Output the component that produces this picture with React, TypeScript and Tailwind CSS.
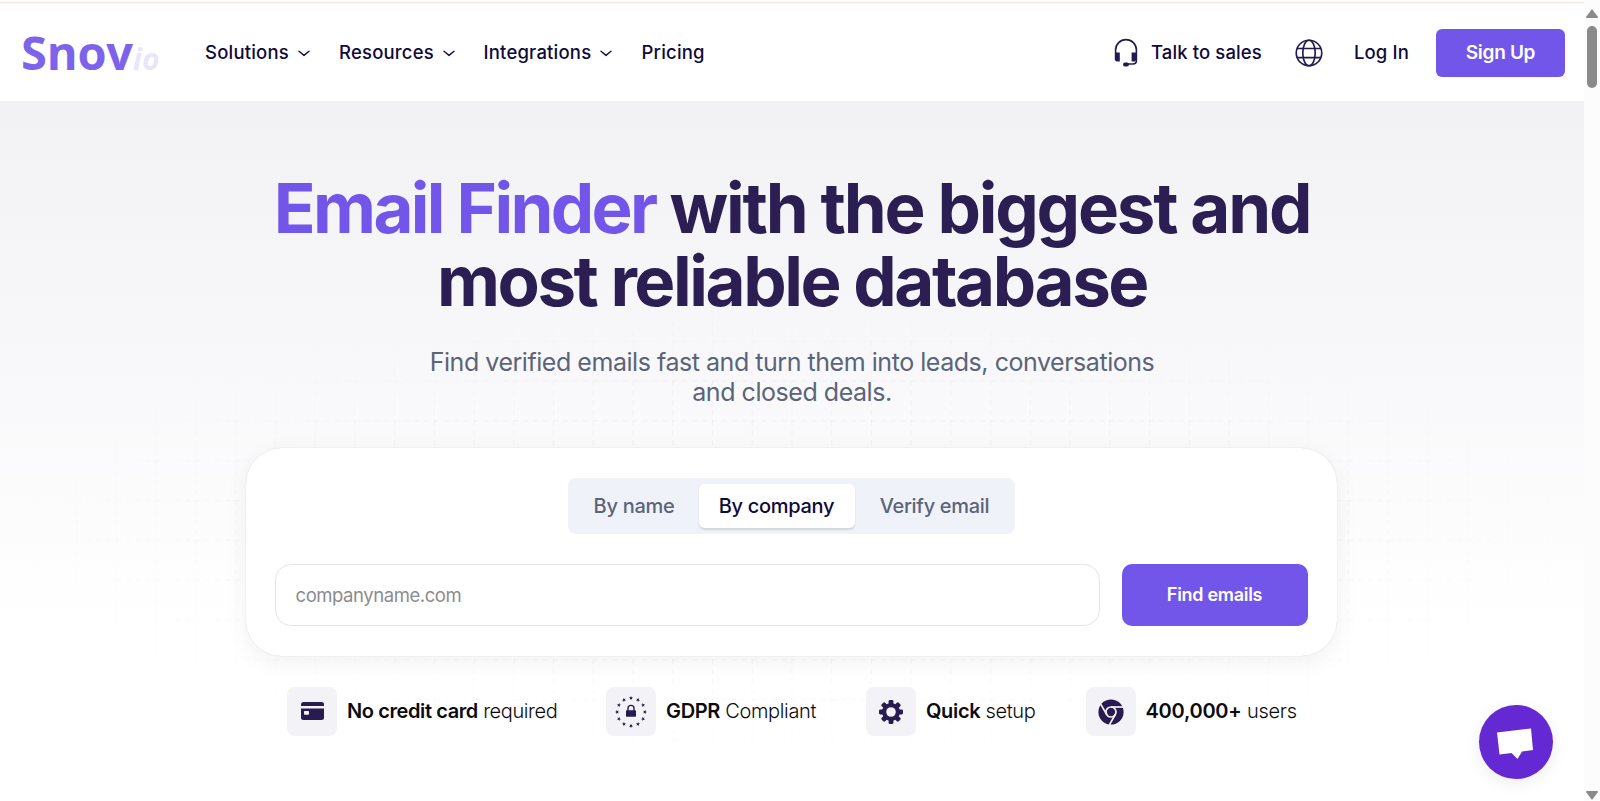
import React, { useState } from "react";

const navLinks = [
  { label: "Solutions", menu: true, width: "w-[134px]" },
  { label: "Resources", menu: true, width: "w-[144.5px]" },
  { label: "Integrations", menu: true, width: "w-[158px]" },
  { label: "Pricing", menu: false, width: "w-[64px]" },
];

const tabs = [
  { label: "By name", width: "w-[129px]" },
  { label: "By company", width: "w-[156px]" },
  { label: "Verify email", width: "w-[160px]" },
];

const Chevron = () => (
  <svg width="12" height="7" viewBox="0 0 12 7" fill="none" stroke="#1b1145" strokeWidth="1.4" strokeLinecap="round" strokeLinejoin="round">
    <path d="M1 1.2 L6 5.4 L11 1.2" />
  </svg>
);

const HeadsetIcon = () => (
  <svg className="-mt-[2px]" width="24" height="29" viewBox="0 0 24 29" fill="none" stroke="#241a52" strokeWidth="1.6">
    <path d="M1.6 22 V12 A10.4 10.4 0 0 1 22.4 12 V22.5 Q22.4 26 19 26 H12" />
    <path d="M1 14.5 H5.8 V23.5 H3 Q1 23.5 1 21.5 Z M17.6 14.5 H23 V21 L21 23.5 H17.6 Z" fill="#241a52" stroke="none" />
    <rect x="9" y="24.6" width="6" height="3.8" rx="1.9" fill="#241a52" stroke="none" />
  </svg>
);

const GlobeIcon = () => (
  <svg width="28" height="28" viewBox="0 0 27 27" fill="none" stroke="#241a52" strokeWidth="1.6">
    <circle cx="13.5" cy="13.5" r="12.3" />
    <ellipse cx="13.5" cy="13.5" rx="6" ry="12.3" />
    <path d="M2 9.2 H25 M2 17.9 H25" />
  </svg>
);

const CardIcon = () => (
  <svg className="-mt-px" width="23" height="18" viewBox="0 0 23 18" fill="#271b52">
    <path d="M2.5 0 H20.5 Q23 0 23 2.5 V4 H0 V2.5 Q0 0 2.5 0 Z" />
    <path fillRule="evenodd" d="M0 6.6 H23 V15.5 Q23 18 20.5 18 H2.5 Q0 18 0 15.5 Z M3.8 9 Q3 9 3 9.8 V12 Q3 12.8 3.8 12.8 H7.2 Q8 12.8 8 12 V9.8 Q8 9 7.2 9 Z" />
  </svg>
);

const GdprIcon = () => (
  <svg width="32" height="32" viewBox="0 0 32 32" fill="#271b52">
    {Array.from({ length: 12 }, (_, i) => (
      <path
        key={i}
        d="M16 0.1 L16.6 1.3 L17.9 1.5 L16.9 2.4 L17.2 3.7 L16 3 L14.8 3.7 L15.1 2.4 L14.1 1.5 L15.4 1.3 Z"
        transform={`rotate(${i * 30} 16 16)`}
      />
    ))}
    <rect x="11" y="14.2" width="10" height="6.6" rx="0.8" />
    <path d="M13 15 V12.4 A3 3 0 0 1 19 12.4 V15" fill="none" stroke="#271b52" strokeWidth="1.4" />
  </svg>
);

const GearIcon = () => (
  <svg width="24" height="24" viewBox="-12 -12 24 24" fill="#271b52">
    {[0, 45, 90, 135].map((a) => (
      <rect key={a} x="-2.4" y="-12" width="4.8" height="24" rx="1.3" transform={`rotate(${a})`} />
    ))}
    <circle r="9" />
    <circle r="4.8" fill="#f3f2f6" />
  </svg>
);

const ChromeIcon = () => (
  <svg width="26" height="26" viewBox="-13 -13 26 26">
    <circle r="12.6" fill="#271b52" />
    <circle r="5" fill="none" stroke="#f3f2f6" strokeWidth="1.7" />
    {[0, 120, 240].map((a) => (
      <path key={a} d="M0 -5 H12.2" stroke="#f3f2f6" strokeWidth="1.7" transform={`rotate(${a})`} />
    ))}
  </svg>
);

const features = [
  { icon: <CardIcon />, bold: "No credit card", text: "required", width: "w-[319px]", tracking: "tracking-[-0.4px]" },
  { icon: <GdprIcon />, bold: "GDPR", text: "Compliant", width: "w-[260px]", tracking: "tracking-[-0.35px]" },
  { icon: <GearIcon />, bold: "Quick", text: "setup", width: "w-[219.5px]", tracking: "tracking-[-0.35px]" },
  { icon: <ChromeIcon />, bold: "400,000+", text: "users", width: "w-[215px]", tracking: "tracking-[-0.25px]" },
];

// faint dashed grid behind the form
const GridBackground = () => (
  <svg
    className="absolute inset-x-0 top-[200px] mask-[radial-gradient(ellipse_52%_52%_at_50%_50%,black_60%,transparent_100%)]"
    width="1584"
    height="460"
    fill="none"
    stroke="#1b1145"
    strokeOpacity="0.035"
  >
    <defs>
      <pattern id="grid" x="36.4" y="0" width="39.74" height="39.8" patternUnits="userSpaceOnUse">
        <path d="M0.5 0 V39.8" strokeDasharray="5 4.95" />
        <path d="M0 0.5 H39.74" strokeDasharray="5 4.935" />
      </pattern>
    </defs>
    <rect width="1584" height="460" fill="url(#grid)" stroke="none" />
  </svg>
);

const Header = () => (
  <header className="bg-white pt-[2px]">
    <div className="flex h-[99px] items-center border-t border-[#fbdfe3] pl-[21px] pr-[19px]">
      <a className="flex w-[184px] items-baseline whitespace-nowrap font-['Open_Sans','Noto_Sans',sans-serif] font-bold text-[#7c63ea]">
        <span className="w-[112px] text-[47px] leading-[60px] tracking-[-0.2px]">Snov</span>
        <span className="text-[30px] italic leading-[40px] text-[#ebe5fb]">io</span>
      </a>
      <nav className="flex pt-[2px] text-[18.5px] font-medium tracking-[0.2px] text-[#0f0a3c]">
        {navLinks.map((item) => (
          <a key={item.label} className={`flex items-center gap-[9px] whitespace-nowrap ${item.width}`}>
            {item.label}
            {item.menu && <Chevron />}
          </a>
        ))}
      </nav>
      <div className="ml-auto flex items-center pt-[2px] text-[18.5px] font-medium tracking-[0.12px] text-[#0f0a3c]">
        <HeadsetIcon />
        <a className="ml-[13px] w-[144px] whitespace-nowrap">Talk to sales</a>
        <GlobeIcon />
        <a className="ml-[31px] w-[82px] whitespace-nowrap">Log In</a>
        <button className="h-[48px] w-[129px] rounded-[6px] bg-[#7256ea] text-[19px] font-semibold tracking-[-0.3px] text-white">
          Sign Up
        </button>
      </div>
    </div>
  </header>
);

const Scrollbar = () => (
  <div className="flex w-4 flex-col items-center bg-[#fcfcfc] pt-[9px] pb-[1px]">
    <svg width="12" height="9" viewBox="0 0 12 9" fill="#8a8a8a">
      <path d="M6 0 L12 8 Q12 9 11 9 H1 Q0 9 0 8 Z" />
    </svg>
    <div className="mt-2 h-[62px] w-[10px] rounded-full bg-[#8a8a8a]" />
    <svg className="mt-auto" width="12" height="9" viewBox="0 0 12 9" fill="#8a8a8a">
      <path d="M6 9 L12 1 Q12 0 11 0 H1 Q0 0 0 1 Z" />
    </svg>
  </div>
);

export default function App() {
  const [tab, setTab] = useState("By company");
  const [company, setCompany] = useState("");

  return (
    <div className="flex h-[801px] w-[1600px] overflow-hidden bg-white font-['Inter',sans-serif]">
      <div className="flex w-[1584px] flex-col">
        <Header />
        <main className="relative flex flex-1 flex-col items-center bg-linear-to-b from-[#f2f2f4] via-[#f9f9fb] via-43% to-white to-75% pt-[71px]">
          <GridBackground />

          <h1 className="relative whitespace-nowrap text-center text-[69px] font-bold leading-[73px] tracking-[-2.42px] text-[#2a1e52]">
            <span className="tracking-[-2.66px] text-[#7256ea]">Email Finder</span>
            <span className="tracking-[-2.23px]"> with the biggest and</span>
            <br />
            most reliable database
          </h1>
          <p className="relative mt-[29px] whitespace-nowrap text-center text-[25px] leading-[30px] tracking-[-0.46px] text-[#5b6478]">
            Find verified emails fast and turn them into leads, conversations
            <br />
            and closed deals.
          </p>

          <section className="relative right-px mt-[41px] flex h-[208px] w-[1091px] flex-col items-center rounded-[36px] bg-white px-[29px] pt-[30px] shadow-[0_0_1px_#00000030,0_6px_24px_#0000000f]">
            <div className="flex h-[56px] w-[447px] items-center rounded-[8px] bg-[#eff3f9] pl-[2px]">
              {tabs.map((t) => (
                <button
                  key={t.label}
                  onClick={() => setTab(t.label)}
                  className={`h-[44px] whitespace-nowrap rounded-[6px] text-[20px] font-medium tracking-[-0.3px] ${t.width} ${
                    tab === t.label ? "bg-white text-[#0f0a3c] shadow-[0_2px_2px_#0000001f]" : "text-[#5b6478]"
                  }`}
                >
                  {t.label}
                </button>
              ))}
            </div>
            <form className="mt-[30px] flex w-full gap-[22px]" onSubmit={(e) => e.preventDefault()}>
              <input
                value={company}
                onChange={(e) => setCompany(e.target.value)}
                placeholder="companyname.com"
                className="h-[62px] w-[825px] rounded-[16px] border border-[#e4e4e7] bg-white px-[20px] text-[18.5px] tracking-[-0.44px] placeholder:text-[#8b8b8f]"
              />
              <button className="h-[62px] w-[186px] rounded-[10px] bg-[#7256ea] pb-[2px] text-[18px] font-semibold tracking-[-0.3px] text-white">
                Find emails
              </button>
            </form>
          </section>

          <ul className="relative mt-[31px] flex w-[1010px]">
            {features.map((f) => (
              <li key={f.bold} className={`flex shrink-0 items-center gap-[10px] ${f.width}`}>
                <span className="flex h-[49px] w-[50px] shrink-0 items-center justify-center rounded-[8px] bg-[#f3f2f6]">{f.icon}</span>
                <span className={`-mt-[2px] whitespace-nowrap text-[20px] font-light text-[#0b0b10] ${f.tracking}`}>
                  <b className="font-semibold">{f.bold}</b> {f.text}
                </span>
              </li>
            ))}
          </ul>

          <button className="absolute top-[604px] left-[1479px] flex size-[74px] items-center justify-center rounded-full bg-[#6429d2] pt-[4px] pr-[2px] shadow-[0_4px_16px_#00000014]">
            <svg width="36" height="32" viewBox="0 0 36 32" fill="#fff">
              <path d="M0 4.5 L34 0.5 L36 22 L25 23.5 L20.5 31 L14.5 25 L2.5 26.5 Z" />
            </svg>
          </button>
        </main>
      </div>
      <Scrollbar />
    </div>
  );
}
